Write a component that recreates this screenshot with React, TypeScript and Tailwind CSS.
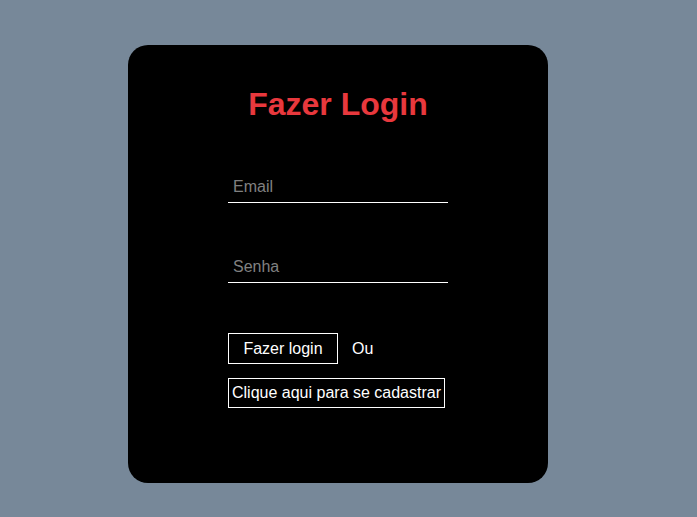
export default function App() {
  return (
    <div className="min-h-[517px] bg-[#778899] pt-[45px] font-['Liberation_Sans',Arial,sans-serif]">
      <div className="ml-[128px] w-[420px] h-[438px] bg-black rounded-[20px] flex flex-col items-center">
        <h1 className="mt-[40px] text-[32px] leading-[38px] font-bold text-[#e8383d]">Fazer Login</h1>
        <form className="mt-[48px] w-[220px] flex flex-col">
          <input
            type="email"
            placeholder="Email"
            className="h-[32px] bg-transparent border-b border-white px-[5px] text-[16px] text-white placeholder:text-[#808080] outline-none"
          />
          <input
            type="password"
            placeholder="Senha"
            className="mt-[48px] h-[32px] bg-transparent border-b border-white px-[5px] text-[16px] text-white placeholder:text-[#808080] outline-none"
          />
          <div className="mt-[50px] flex items-center gap-[14px]">
            <button type="button" className="w-[110px] h-[31px] border border-white text-white text-[16px]">
              Fazer login
            </button>
            <span className="text-white text-[16px]">Ou</span>
          </div>
          <div className="mt-[14px]">
            <button type="button" className="h-[30px] px-[3px] border border-white text-white text-[16px] whitespace-nowrap">
              Clique aqui para se cadastrar
            </button>
          </div>
        </form>
      </div>
    </div>
  );
}
